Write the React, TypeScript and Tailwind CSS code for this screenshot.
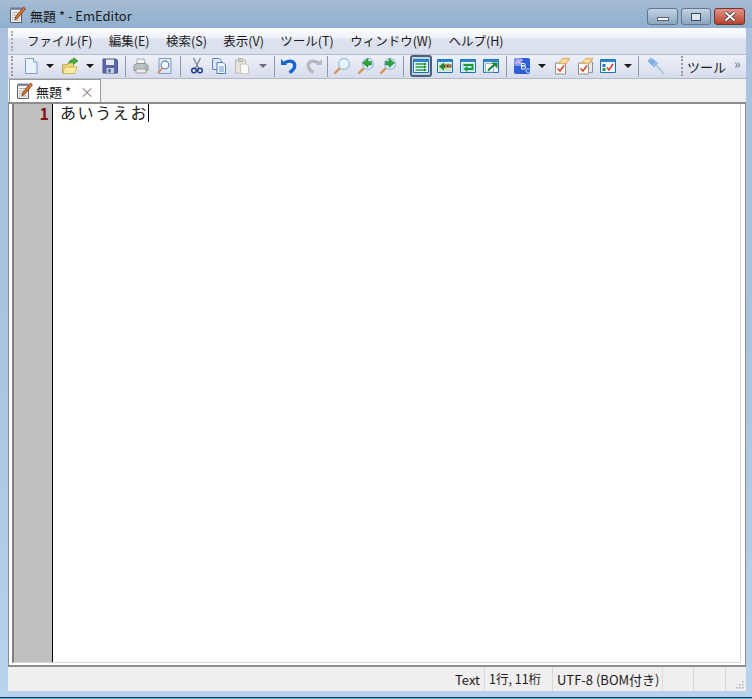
import type { ReactNode } from "react";

const FONT = "font-['Noto_Sans_CJK_JP','Noto_Sans',sans-serif]";

const MENUS = ["ファイル(F)", "編集(E)", "検索(S)", "表示(V)", "ツール(T)", "ウィンドウ(W)", "ヘルプ(H)"];

function Ico({ children, size = 18 }: { children: ReactNode; size?: number }) {
  return (
    <svg width={size} height={size} viewBox="0 0 18 18" fill="none">
      {children}
    </svg>
  );
}

function NotepadIcon() {
  return (
    <Ico>
      <path d="M2.500 3h11v13.500h-11z" fill="#f4f1ea" stroke="#5c5c6c" />
      <path d="M4 6.500h8M4 9h7M4 11.500h5M4 14h8" stroke="#a9a9b8" />
      <path d="M2.500 1.500h11v2h-11z" fill="#6f7c9c" />
      <path d="M15.500 1 17.500 2.800 10 12 7 13.800l.8-3.200z" fill="#d9762a" stroke="#6c2c0c" strokeWidth="0.700" />
    </Ico>
  );
}

function NewDoc() {
  return (
    <Ico>
      <path d="M3.500 1.500h8l3.500 3.500v11.500h-11.500z" fill="#eaf2fc" stroke="#7f9fc8" />
      <path d="M11.500 1.500v3.500h3.500" fill="#fff" stroke="#7f9fc8" />
    </Ico>
  );
}

function OpenFolder() {
  return (
    <Ico>
      <path d="M1.500 7.500h5l1-1.500h5v10h-11z" fill="#efd77a" stroke="#c9ab58" />
      <path d="M2 16.500l1.500-6.500h12.500l-2.500 6.500z" fill="#fbeca4" stroke="#d0b25c" />
      <path d="M7.500 6.500C8 3.500 10 2.300 12.500 2.500V.6l4.500 3.400-4.500 3.400V5.300c-2-.2-3.800 0-5 1.200z" fill="#45ad3c" stroke="#1f7a28" strokeWidth="0.500" />
    </Ico>
  );
}

function Save() {
  return (
    <Ico>
      <path d="M2 2h13l1.500 1.500V16H2z" fill="#5a69ae" stroke="#47558f" />
      <path d="M5 2.500h8v5.500H5z" fill="#e6e9f6" />
      <path d="M5.500 11h7.500v5H5.500z" fill="#c3cae2" />
      <path d="M7.500 12h2v3.500h-2z" fill="#47558f" />
    </Ico>
  );
}

function Printer() {
  return (
    <Ico>
      <path d="M5 2h7l1 5H5z" fill="#f4f4f4" stroke="#a6a6a6" />
      <path d="M2 8.500 5 6.500h8.500l2.500 2v5H2z" fill="#bcc1c4" stroke="#8b9194" />
      <path d="M4 12h10v4H4z" fill="#ececec" stroke="#9c9c9c" />
      <circle cx="13.500" cy="9.500" r="1" fill="#7db87d" />
    </Ico>
  );
}

function Preview() {
  return (
    <Ico>
      <path d="M4 1.500h12v15H4z" fill="#dce8f6" stroke="#7f9cc4" />
      <circle cx="10" cy="8" r="3.800" fill="#f5fbff" stroke="#6a8ab4" strokeWidth="1.200" />
      <path d="M7.500 11 3 16" stroke="#d68a4a" strokeWidth="1.800" />
    </Ico>
  );
}

function Scissors() {
  return (
    <Ico>
      <path d="M5.500 1 10.500 11M12.500 1 7.500 11" stroke="#7b8494" strokeWidth="1.300" />
      <circle cx="6" cy="13.500" r="2.300" stroke="#233f8c" strokeWidth="1.500" />
      <circle cx="12" cy="13.500" r="2.300" stroke="#233f8c" strokeWidth="1.500" />
    </Ico>
  );
}

function Copy() {
  return (
    <Ico>
      <path d="M2.500 1.500h7l2 2v9h-9z" fill="#dbe7f7" stroke="#5f86bd" />
      <path d="M7 5.500h6l2.500 2.500v8.500H7z" fill="#f3f7fd" stroke="#4f7ab8" />
      <path d="M9 10h5M9 12h5M9 14h5" stroke="#6f97cc" />
    </Ico>
  );
}

function Paste() {
  return (
    <Ico>
      <path d="M2.500 3h10v13h-10z" fill="#e4e4de" stroke="#bcbcb4" />
      <path d="M5.500 1.500h4v3h-4z" fill="#d2d2cb" stroke="#b4b4ac" />
      <path d="M7.500 7h6l2 2v7.500h-8z" fill="#f8f8f5" stroke="#c8c8c0" />
    </Ico>
  );
}

function Undo({ redo = false }: { redo?: boolean }) {
  const c = redo ? "#b4b9bd" : "#1766d0";
  return (
    <Ico>
      <g transform={redo ? "matrix(-1 0 0 1 18 0)" : undefined}>
        <path d="M1 8V2l6 6z" fill={c} />
        <path d="M4 6.500c3-3 9-3.500 10.500.5 1 3.500-1.500 6.500-5 8.500" stroke={c} strokeWidth="3.400" />
      </g>
    </Ico>
  );
}

function Magnifier({ arrow }: { arrow?: "l" | "r" }) {
  return (
    <Ico>
      <path d="M7.500 10.500 1.500 16.500" stroke="#d99050" strokeWidth="2.400" />
      <circle cx="11" cy="7" r="5.500" fill="#e6f3fb" stroke="#9cc0dc" strokeWidth="1.300" />
      {arrow && (
        <path
          d={arrow === "l" ? "M11 1.500 5.500 6l5.500 4.500V8h3.500V4.500H11z" : "M10 1.500 15.500 6 10 10.500V8H6.500V4.500H10z"}
          fill="#2fa23c"
          stroke="#167226"
          strokeWidth="0.500"
        />
      )}
    </Ico>
  );
}

function BlueFrame({ children }: { children: ReactNode }) {
  return (
    <Ico>
      <path d="M1.500 2.500h15v13h-15z" fill="#e8f3fb" stroke="#1a6fb5" />
      <path d="M1.500 2.500h15v2.500h-15z" fill="#2b86cc" />
      {children}
    </Ico>
  );
}

function ViewIcon({ kind }: { kind: number }) {
  if (kind === 0)
    return (
      <BlueFrame>
        <path d="M3.500 7h9M3.500 10h9M3.500 13h9" stroke="#23a046" strokeWidth="1.500" />
        <path d="M12 5.500 15 7l-3 1.500zM12 8.500 15 10l-3 1.500zM12 11.500l3 1.500-3 1.500z" fill="#148a32" />
      </BlueFrame>
    );
  if (kind === 1)
    return (
      <BlueFrame>
        <path d="M3 6h12v8.500H3z" fill="#c3e8c8" />
        <path d="M3 9.500 8 5.500v8z" fill="#1f8a30" />
        <path d="M8 7.500h7.500v3H8z" fill="#7c3410" />
        <path d="M9 9h2M12.500 9h2" stroke="#f4e0b0" />
      </BlueFrame>
    );
  if (kind === 2)
    return (
      <BlueFrame>
        <path d="M3 6h12v8.500H3z" fill="#bfe6f2" />
        <path d="M4.500 8h9v4H7.500" stroke="#1f9a38" strokeWidth="2" />
        <path d="M8.500 9 4.500 12l4 3z" fill="#1f9a38" />
      </BlueFrame>
    );
  return (
    <BlueFrame>
      <path d="M3.500 6.500h8v8.500h-8z" fill="#fff" stroke="#9ab0c4" />
      <path d="M6 13.500 12.500 7.500" stroke="#16893a" strokeWidth="2" />
      <path d="M9.500 5.500h6v6z" fill="#16893a" />
    </BlueFrame>
  );
}

function Encoding() {
  return (
    <Ico>
      <rect x="1" y="1" width="16" height="16" rx="2" fill="#2f5fd8" />
      <rect x="1" y="1" width="8" height="8" rx="2" fill="#7f9cf4" />
      <path d="M2.500 7 5.500 2.500 7 7M3.500 5.500h3M7 3.500l3-1" stroke="#f6b8ee" strokeWidth="1" />
      <path d="M8.500 6.500h2.500c1.500 0 1.500 2.500 0 2.500H8.500zM8.500 9h3c1.500 0 1.500 3-.5 3H8.500z" stroke="#fff" strokeWidth="1" />
      <path d="M16.500 12.500c-1-1.200-3.500-.8-3.500 1.200s2.500 2.500 3.500 1.300" stroke="#e4ecff" strokeWidth="1" />
    </Ico>
  );
}

function Checklist({ stacked = false }: { stacked?: boolean }) {
  return (
    <Ico>
      {stacked && <path d="M7 5h9.500v10.500h-3" fill="#e4e8f2" stroke="#8a8fa8" />}
      <path d="M2.500 6h10v11h-10z" fill="#fff" stroke="#9a8c7a" />
      <path d="M4.500 11.500 7 14l4-5.500" stroke="#d8442a" strokeWidth="1.600" />
      <path d="M5 6.500 10 1l7 .5-4 5.500z" fill="#f4c878" stroke="#d09a50" strokeWidth="0.600" />
      <path d="M8 4l5-1.500M9.500 5.500l4.500-1.500" stroke="#fff" strokeWidth="0.600" />
    </Ico>
  );
}

function CheckWindow() {
  return (
    <Ico>
      <path d="M1.500 2.500h15v13h-15z" fill="#f3f8fd" stroke="#1a6fb5" />
      <path d="M1.500 2.500h15v2.500h-15z" fill="#2b86cc" />
      <path d="M3.500 7h3v3h-3z" fill="#2b6fd0" />
      <path d="M3.500 11h3v3h-3z" fill="#1f9a58" />
      <path d="M8 10.500l2 2.500 4-6" stroke="#d8442a" strokeWidth="1.600" />
    </Ico>
  );
}

function Pin() {
  return (
    <Ico>
      <path d="M1 4 4 1l6.500 5-3.500 4z" fill="#9cc4ec" stroke="#84acd6" />
      <path d="M9 8 17 17" stroke="#a6bfd8" strokeWidth="1.300" />
      <circle cx="5" cy="5" r="2.500" fill="#7fb0e4" />
    </Ico>
  );
}

function Drop() {
  return <div className="h-0 w-0 border-x-[4px] border-t-[4px] border-x-transparent border-t-[#1a1a1a]" />;
}

function Sep() {
  return <div className="h-[21px] w-px bg-[#8f98a8]" />;
}

function Cell({ w, children }: { w: number; children: ReactNode }) {
  return (
    <div className="flex h-full shrink-0 items-center justify-center" style={{ width: w }}>
      {children}
    </div>
  );
}

function Grip() {
  return <div className="h-[20px] w-[3px] border-l-[2px] border-dotted border-[#9a9a9a]" />;
}

// width of each cell follows the spacing in the toolbar, left to right
const TOOLS: [number, ReactNode][] = [
  [22, <NewDoc />],
  [16, <Drop />],
  [24, <OpenFolder />],
  [16, <Drop />],
  [24, <Save />],
  [6, <Sep />],
  [26, <Printer />],
  [20, <Preview />],
  [12, <Sep />],
  [22, <Scissors />],
  [22, <Copy />],
  [24, <Paste />],
  [18, <div className="opacity-60"><Drop /></div>],
  [4, <Sep />],
  [25, <Undo />],
  [25, <Undo redo />],
  [3, <Sep />],
  [26, <Magnifier />],
  [22, <Magnifier arrow="l" />],
  [22, <Magnifier arrow="r" />],
  [9, <Sep />],
  [25, <div className="flex h-[22px] w-[22px] items-center justify-center rounded-[3px] border-2 border-[#4a5f7c] bg-[#c4d2e2]"><ViewIcon kind={0} /></div>],
  [23, <ViewIcon kind={1} />],
  [23, <ViewIcon kind={2} />],
  [23, <ViewIcon kind={3} />],
  [8, <Sep />],
  [24, <Encoding />],
  [16, <Drop />],
  [23, <Checklist />],
  [23, <Checklist stacked />],
  [23, <CheckWindow />],
  [17, <Drop />],
  [5, <Sep />],
  [30, <Pin />],
  [10, <div />],
];

export default function App() {
  return (
    <div className={`${FONT} flex h-[699px] w-[752px] flex-col overflow-hidden bg-gradient-to-b from-[#a9c1dc] via-[#a9c4e0] to-[#b7d3ee] text-[#1a1a1a]`}>
      {/* title bar */}
      <div className="flex h-[28px] shrink-0 bg-gradient-to-b from-[#a5bcd4] to-[#8fb0d0]">
        <div className="flex items-center gap-[2px] pl-[8px] pt-[2px] text-[13px] leading-none">
          <NotepadIcon />
          <span className="ml-[2px]">無題 * - EmEditor</span>
        </div>
        <div className="ml-auto flex gap-[3px] pr-[7px] pt-[8px]">
          <div className="flex h-[17px] w-[31px] items-end justify-center rounded-[3px] border border-[#61758c] bg-gradient-to-b from-[#c4d4e4] to-[#8aa6c0] pb-[3px]">
            <div className="h-[4px] w-[12px] border border-[#56606c] bg-white" />
          </div>
          <div className="flex h-[17px] w-[30px] items-center justify-center rounded-[3px] border border-[#61758c] bg-gradient-to-b from-[#c4d4e4] to-[#8aa6c0]">
            <div className="h-[8px] w-[10px] border-[1.500px] border-[#3c4650] bg-[#dfe8f0]" />
          </div>
          <div className="flex h-[17px] w-[31px] items-center justify-center rounded-[3px] border border-[#70352e] bg-gradient-to-b from-[#e09488] to-[#b8402e]">
            <svg width="14" height="11" viewBox="0 0 14 11">
              <path d="M2.500 1.500 11.500 9.500M11.500 1.500 2.500 9.500" stroke="#2b2f36" strokeWidth="3.600" />
              <path d="M2.500 1.500 11.500 9.500M11.500 1.500 2.500 9.500" stroke="#fff" strokeWidth="2.200" />
            </svg>
          </div>
        </div>
      </div>

      {/* client area */}
      <div className="ml-[8px] mr-[6px] flex min-h-0 flex-1 flex-col bg-[#f0eeee]">
        <div className="flex h-[26px] shrink-0 items-center bg-[linear-gradient(#fbfcfe_0%,#eff2f8_38%,#dfe3f0_42%,#d8deee_100%)] pl-[3px]">
          <div className="h-[20px] w-[3px] border-l-[2px] border-dotted border-[#a8a8a8]" />
          <div className="ml-[13px] flex gap-[16.400px] text-[12.500px] leading-none">
            {MENUS.map((m) => (
              <span key={m}>{m}</span>
            ))}
          </div>
        </div>
        <div className="h-px shrink-0 bg-[#b8bcc4]" />
        <div className="flex h-[24px] shrink-0 items-center border-b border-[#b4b8c4] bg-gradient-to-b from-[#eef1f8] to-[#d6dcec] pb-[1px] pl-[3px]">
          <Grip />
          <div className="ml-[6px] flex h-full items-center">
            {TOOLS.map(([w, node], i) => (
              <Cell key={i} w={w}>
                {node}
              </Cell>
            ))}
          </div>
          <Grip />
          <span className="ml-[3px] text-[13px] leading-none">ツール</span>
          <span className="-mt-[7px] ml-[8px] text-[14px] leading-none text-[#6a7a90]">»</span>
        </div>

        {/* tab strip */}
        <div className="flex h-[23px] shrink-0 items-end bg-[#f0f0f0] pl-px">
          <div className="flex h-[23px] w-[92px] items-center border-x border-t border-[#9a9a9a] bg-white pl-[5px] text-[13px] leading-none">
            <NotepadIcon />
            <span className="ml-[3px]">無題 *</span>
            <span className="ml-[9px] text-[14px] leading-none text-[#8a8a8a]">×</span>
          </div>
        </div>

        {/* editor */}
        <div className="flex min-h-0 flex-1 border-x border-b-2 border-t-2 border-[#8c8c8c] bg-white pb-[2px] pl-[3px] pr-[4px]">
          <div className="flex min-w-0 flex-1 border-b border-l-2 border-r border-[#d8d8d8] border-l-[#808080]">
            <div className="flex w-[39px] shrink-0 justify-end border-r border-black bg-[#c0c0c0] pr-[3px] text-[16px] font-bold leading-[18px] text-[#7e1414]">
              1
            </div>
            <div className="flex items-start pl-[7px] text-[#222]">
              <span className="text-[16px] leading-[17px] tracking-[1.600px]">あいうえお</span>
              <span className="h-[18px] w-px bg-black" />
            </div>
          </div>
        </div>

        {/* status bar */}
        <div className="flex h-[24px] shrink-0 items-center justify-end bg-[#f0eeee] text-[13px] leading-none">
          <div className="flex h-full items-center border-r border-[#d8d8d8] pr-[4px]">Text</div>
          <div className="flex h-full w-[68px] items-center border-r border-[#d8d8d8] pl-[4px] text-[12.500px]">1行, 11桁</div>
          <div className="flex h-full w-[110px] items-center border-r border-[#d8d8d8] pl-[4px]">UTF-8 (BOM付き)</div>
          <div className="h-full w-[31px] border-r border-[#d8d8d8]" />
          <div className="h-full w-[32px] border-r border-[#d8d8d8]" />
          <div className="flex h-full w-[20px] items-end justify-end pb-[2px] pr-[1px]">
            <svg width="10" height="10" viewBox="0 0 10 10">
              <path d="M7 2h1.500v1.500H7zM4 5h1.500v1.500H4zM7 5h1.500v1.500H7zM1 8h1.500v1.500H1zM4 8h1.500v1.500H4zM7 8h1.500v1.500H7z" fill="#b0b0b0" />
            </svg>
          </div>
        </div>
      </div>

      {/* bottom frame */}
      <div className="h-[6px] shrink-0" />
      <div className="h-[1px] shrink-0 bg-[#1c2c44]" />
      <div className="h-[1px] shrink-0 bg-[#58c0e8]" />
    </div>
  );
}
